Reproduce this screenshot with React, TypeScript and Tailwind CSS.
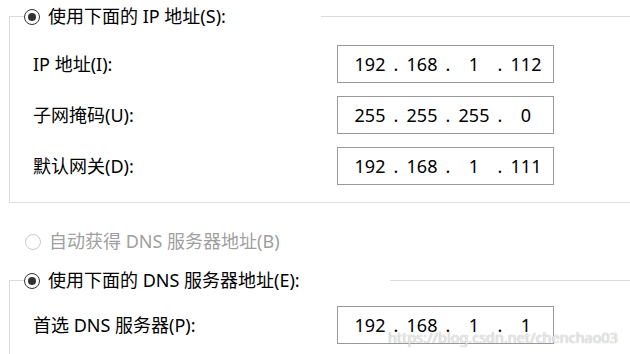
import React from 'react';

const font = { fontFamily: '"Segoe UI", "Noto Sans", "Noto Sans CJK SC", sans-serif' };

function Radio({ checked, disabled }: { checked?: boolean; disabled?: boolean }) {
  return (
    <span
      className={`flex h-[16px] w-[16px] items-center justify-center rounded-full bg-white ${
        disabled ? 'border border-[#cccccc]' : 'border-[1.5px] border-[#333333]'
      }`}
    >
      {checked && <span className="h-[8px] w-[8px] rounded-full bg-[#333333]" />}
    </span>
  );
}

function IpBox({ parts }: { parts: string[] }) {
  return (
    <div className="flex h-[38px] w-[217px] items-center border border-[#999999] bg-white pl-[15px] text-[18px] text-black">
      {parts.map((p, i) => (
        <React.Fragment key={i}>
          <span className="w-[34px] text-center">{p}</span>
          {i < 3 && <span className="w-[18px] text-center">.</span>}
        </React.Fragment>
      ))}
    </div>
  );
}

function Row({ label, parts }: { label: string; parts: string[] }) {
  return (
    <div className="flex items-center">
      <span className="w-[327px] pl-[23px] text-[18px] text-black">{label}</span>
      <IpBox parts={parts} />
    </div>
  );
}

export default function App() {
  return (
    <div className="relative h-[354px] w-[630px] overflow-hidden bg-white" style={font}>
      <fieldset className="ml-[9px] mt-[3px] w-[700px] border border-[#dcdcdc] pb-[17px] pl-[14px] pt-[15px]">
        <legend className="flex items-center gap-[8px] pr-[95px] text-[18px] text-black">
          <Radio checked />
          <span>使用下面的 IP 地址(S):</span>
        </legend>
        <div className="-ml-[14px] flex flex-col gap-[13px]">
          <Row label="IP 地址(I):" parts={['192', '168', '1', '112']} />
          <Row label="子网掩码(U):" parts={['255', '255', '255', '0']} />
          <Row label="默认网关(D):" parts={['192', '168', '1', '111']} />
        </div>
      </fieldset>

      <div className="ml-[25px] mt-[25px] flex items-center gap-[8px] text-[18px] text-[#a0a0a0]">
        <Radio disabled />
        <span>自动获得 DNS 服务器地址(B)</span>
      </div>

      <fieldset className="ml-[9px] mt-[12px] w-[700px] border border-[#dcdcdc] pl-[14px] pt-[12px]">
        <legend className="flex items-center gap-[8px] pr-[90px] text-[18px] text-black">
          <Radio checked />
          <span>使用下面的 DNS 服务器地址(E):</span>
        </legend>
        <div className="-ml-[14px] flex flex-col pb-[20px]">
          <Row label="首选 DNS 服务器(P):" parts={['192', '168', '1', '1']} />
        </div>
      </fieldset>

      {/* csdn watermark over the last box */}
      <div className="pointer-events-none absolute left-[388px] top-[327px] text-[14.5px] text-white/80 [text-shadow:0_0_1px_#888]">
        https://blog.csdn.net/chenchao03
      </div>
    </div>
  );
}
